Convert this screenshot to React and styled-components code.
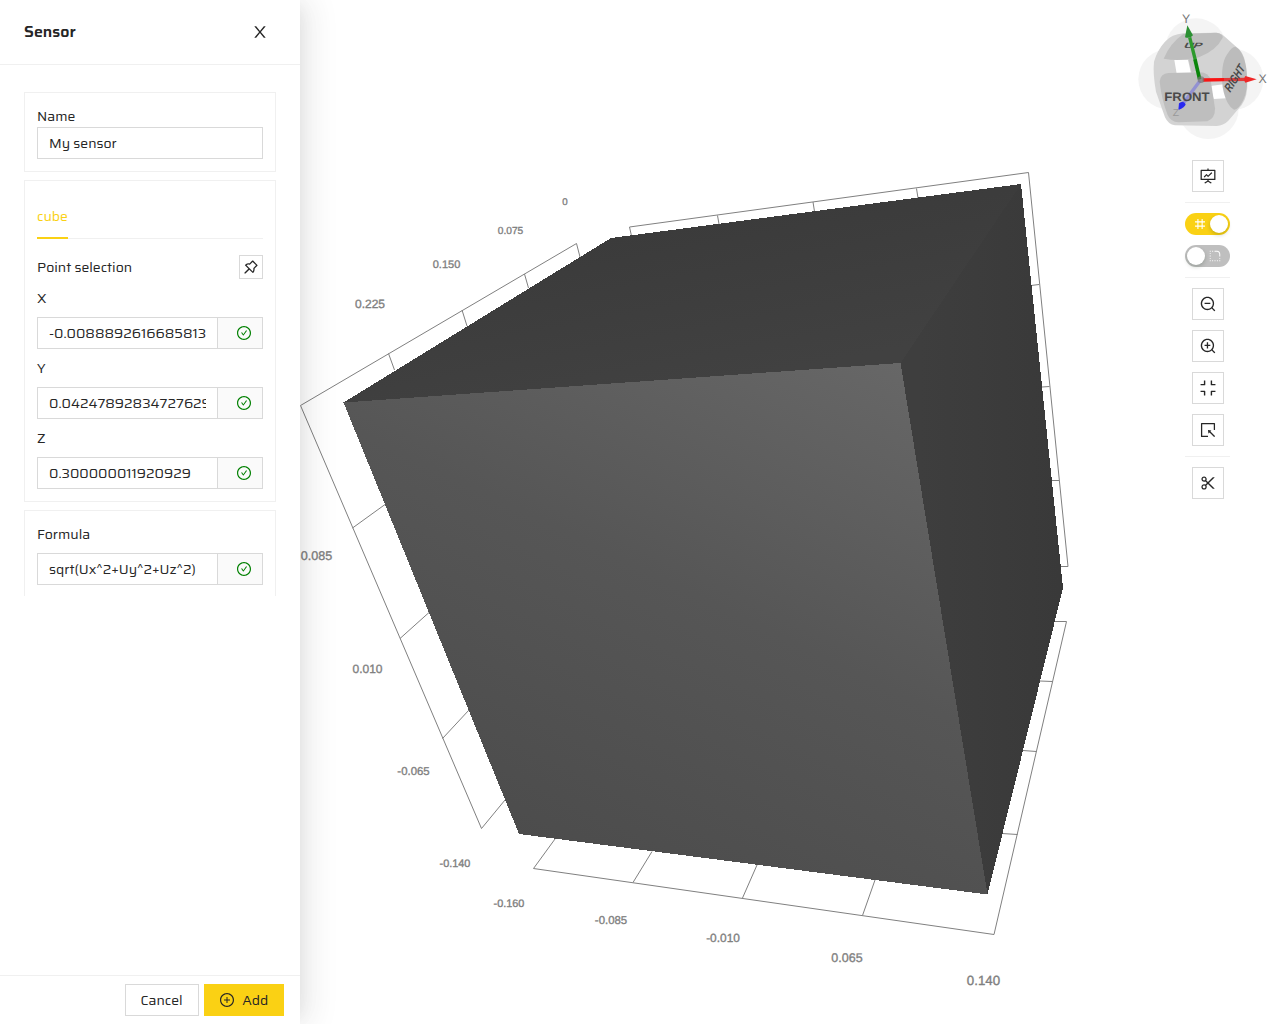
import React from 'react';
import styled, { createGlobalStyle } from 'styled-components';
import {
  AiOutlineCheckCircle,
  AiOutlineCompress,
  AiOutlineFundProjectionScreen,
  AiOutlineNumber,
  AiOutlinePlusCircle,
  AiOutlinePushpin,
  AiOutlineRadiusUpright,
  AiOutlineScissor,
  AiOutlineSelect,
  AiOutlineZoomIn,
  AiOutlineZoomOut,
} from 'react-icons/ai';

const GlobalStyle = createGlobalStyle`
  *, *::before, *::after { box-sizing: border-box; }
  body {
    margin: 0;
    background: #fff;
    color: #262626;
    font-family: Saira, Inter, "Noto Sans", sans-serif;
    font-size: 14px;
    line-height: 22px;
    overflow: hidden;
  }
  button, input { font: inherit; color: inherit; }
`;

const Page = styled.div`
  display: flex;
  width: 1280px;
  height: 1024px;
  overflow: hidden;
`;

const Drawer = styled.aside`
  display: flex;
  flex-direction: column;
  flex: 0 0 300px;
  background: #fff;
  z-index: 1;
  box-shadow: 6px 0 16px -8px rgba(0, 0, 0, 0.08), 9px 0 28px rgba(0, 0, 0, 0.05),
    6px 0 36px 6px rgba(0, 0, 0, 0.04);
`;

const DrawerHeader = styled.header`
  display: flex;
  align-items: center;
  justify-content: space-between;
  flex: 0 0 65px;
  padding: 0 31px 1px 24px;
  border-bottom: 1px solid #f0f0f0;
`;

const Title = styled.h1`
  margin: 0;
  font-size: 16px;
  font-weight: 600;
`;

const CloseButton = styled.button`
  display: flex;
  padding: 0;
  border: 0;
  background: none;
`;

const DrawerBody = styled.div`
  display: flex;
  flex-direction: column;
  gap: 8px;
  flex: 1;
  padding: 27px 24px 0;
`;

const DrawerFooter = styled.footer`
  display: flex;
  justify-content: flex-end;
  gap: 5px;
  flex: 0 0 49px;
  padding: 8px 16px;
  border-top: 1px solid #f0f0f0;
`;

const Card = styled.section`
  display: flex;
  flex-direction: column;
  gap: ${(p) => p.$gap || 0}px;
  padding: 12px;
  border: 1px solid #f0f0f0;
  ${(p) => p.$open && 'border-bottom: 0; padding-bottom: 11px;'}
`;

const Label = styled.div`
  height: 22px;
  white-space: nowrap;
`;

const TextInput = styled.input`
  flex: 1;
  min-width: 0;
  width: 100%;
  height: 32px;
  padding: 4px 11px;
  border: 1px solid #d9d9d9;
  border-radius: 0;
  background: #fff;
  outline: none;
`;

const InputGroup = styled.div`
  display: flex;
  height: 32px;
`;

const Addon = styled.span`
  display: flex;
  align-items: center;
  justify-content: flex-end;
  width: 45px;
  padding-right: 10px;
  border: 1px solid #d9d9d9;
  border-left: 0;
  background: #fafafa;
  color: #008000;
  font-size: 16px;
`;

const TabBar = styled.div`
  display: flex;
  height: 46px;
  margin-bottom: 8px;
  box-shadow: inset 0 -1px #f0f0f0;
`;

const Tab = styled.div`
  width: 31px;
  padding-top: 12px;
  border-bottom: 2px solid #fad114;
  color: #fad114;
  white-space: nowrap;
`;

const SelectionRow = styled.div`
  display: flex;
  align-items: center;
  justify-content: space-between;
  height: 24px;
`;

const IconButton = styled.button`
  display: flex;
  align-items: center;
  justify-content: center;
  width: ${(p) => p.$size}px;
  height: ${(p) => p.$size}px;
  padding: 0;
  border: 1px solid #d9d9d9;
  background: #fff;
  font-size: 18px;
`;

const Button = styled.button`
  display: flex;
  align-items: center;
  justify-content: center;
  gap: 7.5px;
  width: ${(p) => p.$width}px;
  height: 32px;
  padding: 0 1px 0 0;
  border: 1px solid ${(p) => (p.$primary ? '#fad114' : '#d9d9d9')};
  background: ${(p) => (p.$primary ? '#fad114' : '#fff')};
`;

const Viewer = styled.main`
  position: relative;
  flex: 1;
`;

const Scene = styled.svg`
  display: block;
  width: 980px;
  height: 1024px;
  font-family: "Liberation Sans", Arial, sans-serif;
  text-rendering: geometricPrecision;
`;

const Toolbar = styled.div`
  position: absolute;
  top: 160px;
  right: 50px;
  display: flex;
  flex-direction: column;
  align-items: center;
  gap: 10px;
  width: 45px;
`;

const Divider = styled.div`
  width: 45px;
  height: 1px;
  background: #f0f0f0;
`;

const Switch = styled.button`
  display: flex;
  flex-direction: ${(p) => (p.$on ? 'row' : 'row-reverse')};
  align-items: center;
  justify-content: space-between;
  width: 45px;
  height: 22px;
  padding: ${(p) => (p.$on ? '0 2px 0 8px' : '0 8px 0 2px')};
  border: 0;
  border-radius: 11px;
  background: ${(p) => (p.$on ? '#fad114' : '#bfbfbf')};
  color: #fff;
  font-size: 14px;
`;

const Knob = styled.span`
  width: 18px;
  height: 18px;
  border-radius: 50%;
  background: #fff;
  box-shadow: 0 2px 4px rgba(0, 35, 11, 0.2);
`;

const CloseIcon = () => (
  <svg width="18" height="18" viewBox="0 0 1024 1024" fill="currentColor">
    <path d="M563.8 512l262.5-312.9c4.4-5.2.7-13.1-6.1-13.1h-79.8c-4.7 0-9.2 2.1-12.3 5.7L511.6 449.8 295.1 191.7c-3-3.6-7.5-5.7-12.3-5.7H203c-6.8 0-10.5 7.9-6.1 13.1L459.4 512 196.9 824.9A7.95 7.95 0 0 0 203 838h79.8c4.7 0 9.2-2.1 12.3-5.7l216.5-258.1 216.5 258.1c3 3.6 7.5 5.7 12.3 5.7h79.8c6.8 0 10.5-7.9 6.1-13.1L563.8 512z" />
  </svg>
);

const GRID = [
  'M580 257L576.500 243.500L300.500 405.500L481.500 828.500L505 800',
  'M524.500 274L528.500 288M462 310L467 326M388.500 353.500L394.500 370',
  'M352.500 528L385 504.500M400 638.500L429 612.500M442.500 738.500L469 710',
  'M555 839L533.500 868.500L994 934.500L1066.500 621.500H1055',
  'M633 882.500L652 851.500M742.500 898L757 865M862.500 915.500L875 880',
  'M1017.500 834.500L1002 833.500M1036.500 751.500L1023 750.500M1052.500 681.500L1040 681',
  'M631.500 236L629.500 227L1028.500 172.500L1068 566.500H1060',
  'M717.500 215.500L719 224M813 202L814.500 211.500M916.500 188.500L918 198',
  'M1039 284.500L1031 285.500M1049.500 386.500L1042 387M1059 480.500L1052 480.500',
];

const TICKS = [
  ['0', 565, 202, 9.7],
  ['0.075', 510.5, 230.5, 10.2],
  ['0.150', 446.5, 264, 11],
  ['0.225', 370, 303.5, 12],
  ['0.085', 316.5, 555.5, 12.6],
  ['0.010', 367.5, 669, 12],
  ['-0.065', 413.5, 771, 11.4],
  ['-0.140', 455, 863, 10.9],
  ['-0.160', 509, 903.5, 10.9],
  ['-0.085', 611, 920, 11.4],
  ['-0.010', 723, 938, 11.9],
  ['0.065', 847, 958, 12.5],
  ['0.140', 983.5, 980, 13.3],
];

const Orientation = () => (
  <g transform="translate(1120 0) scale(0.33333)">
    <g fill="#f4f4f4">
      <circle cx="228" cy="147" r="92" />
      <circle cx="145" cy="238" r="90" />
      <circle cx="338" cy="238" r="92" />
      <circle cx="265" cy="326" r="91" />
    </g>
    <path
      fill="#d3d3d3"
      d="M135 125Q155 103 190 100L285 98Q300 98 312 108L345 137Q372 155 376 190L382 240Q384 290 365 315L325 362Q310 377 290 378L165 376Q145 374 135 352L108 275Q98 220 102 185Q112 150 135 125Z"
    />
    <path fill="#fff" d="M163 180L204 180L213 220L170 221ZM271 258L311 253L318 295L281 297Z" />
    <path fill="#bebebe" d="M131 176Q150 130 190 102L290 98Q310 102 308 113Q290 150 237 172Q180 186 131 176Z" />
    <path fill="#bebebe" d="M119 245Q121 221 145 219L240 217Q265 217 272 240L285 325Q286 355 262 364L175 367Q152 365 143 345Q125 300 119 245Z" />
    <path fill="#bcbcbc" d="M346 140Q370 152 379 205Q387 265 370 300Q355 330 342 329Q318 316 308 262Q301 195 320 165Q335 140 346 140Z" />
    <path fill="none" stroke="#c4c4c4" strokeWidth="14" d="M212 175L222 215" />
    <text
      transform="translate(216 144) skewX(-30)"
      fontSize="23"
      fontWeight="700"
      fill="#4c4c4c"
      textAnchor="middle"
      textLength="54"
      lengthAdjust="spacingAndGlyphs"
    >
      UP
    </text>
    <path stroke="#2d9a2d" strokeWidth="10" d="M226 180L209 112" />
    <path stroke="#0a850a" strokeWidth="11" d="M239 238L225 178" />
    <path fill="#2b9033" d="M202 76L219 106Q209 117 195 112Z" />
    <path stroke="#f91414" strokeWidth="10" d="M248 240L312 239" />
    <path stroke="#e03a3a" strokeWidth="10" d="M312 239L380 238" />
    <path fill="#f02828" d="M410 238L376 248Q369 238 376 228Z" />
    <path stroke="#9291d2" strokeWidth="10" d="M240 242L190 310" />
    <circle cx="243" cy="239" r="10" fill="#777" opacity="0.7" />
    <g fontWeight="700" fill="#4a4a4a" textAnchor="middle">
      <text x="201" y="303" fontSize="37" textLength="136" lengthAdjust="spacingAndGlyphs">FRONT</text>
      <text transform="translate(353 243) rotate(-58) skewX(-14)" fontSize="36" textLength="86" lengthAdjust="spacingAndGlyphs">RIGHT</text>
    </g>
    <path fill="#2929f0" d="M175 330L177 310Q190 299 197 313Q195 323 175 330Z" />
    <g fill="#777" textAnchor="middle" fontSize="37">
      <text x="198" y="70">Y</text>
      <text x="428" y="248">X</text>
      <text x="168" y="349" fontSize="31" fill="#999">Z</text>
    </g>
  </g>
);

const CubeScene = () => (
  <Scene viewBox="300 0 980 1024">
    <defs>
      <linearGradient id="front" gradientUnits="userSpaceOnUse" x1="901" y1="363" x2="640" y2="900">
        <stop offset="0" stopColor="#676767" />
        <stop offset="0.5" stopColor="#565656" />
        <stop offset="1" stopColor="#4c4c4c" />
      </linearGradient>
      <linearGradient id="top" gradientUnits="userSpaceOnUse" x1="700" y1="220" x2="730" y2="380">
        <stop offset="0" stopColor="#3b3b3b" />
        <stop offset="1" stopColor="#414141" />
      </linearGradient>
      <linearGradient id="side" gradientUnits="userSpaceOnUse" x1="920" y1="500" x2="1060" y2="500">
        <stop offset="0" stopColor="#3e3e3e" />
        <stop offset="1" stopColor="#393939" />
      </linearGradient>
    </defs>
    {GRID.map((d) => (
      <path key={d} d={d} fill="none" stroke="#808080" strokeWidth="1" />
    ))}
    <g shapeRendering="crispEdges">
      <polygon points="343.5,402.5 611,238 1021,184 1063,588 987.5,894.5 519,834" fill="#3d3d3d" />
      <polygon points="343.5,402.5 611,238 1021,184 901,363" fill="url(#top)" />
      <polygon points="900.5,363 1021,184 1063,588 987.5,894.5" fill="url(#side)" />
      <polygon points="343.5,402.5 900.5,363 987.5,894.5 519,834" fill="url(#front)" />
    </g>
    {TICKS.map(([text, x, y, size]) => (
      <text key={text + x} x={x} y={y + size * 0.34} fontSize={size} textAnchor="middle" fill="#808080" stroke="#808080" strokeWidth="0.35">
        {text}
      </text>
    ))}
    <Orientation />
  </Scene>
);

const CheckedInput = ({ value }) => (
  <InputGroup>
    <TextInput defaultValue={value} />
    <Addon>
      <AiOutlineCheckCircle />
    </Addon>
  </InputGroup>
);

export default function App() {
  return (
    <Page>
      <GlobalStyle />
      <Drawer>
        <DrawerHeader>
          <Title>Sensor</Title>
          <CloseButton aria-label="Close">
            <CloseIcon />
          </CloseButton>
        </DrawerHeader>
        <DrawerBody>
          <Card>
            <Label>Name</Label>
            <TextInput defaultValue="My sensor" />
          </Card>
          <Card $gap={8}>
            <TabBar>
              <Tab>cube</Tab>
            </TabBar>
            <SelectionRow>
              <Label>Point selection</Label>
              <IconButton $size={24} aria-label="Pick point">
                <AiOutlinePushpin />
              </IconButton>
            </SelectionRow>
            <Label>X</Label>
            <CheckedInput value="-0.0088892616685813" />
            <Label>Y</Label>
            <CheckedInput value="0.04247892834727629" />
            <Label>Z</Label>
            <CheckedInput value="0.300000011920929" />
          </Card>
          <Card $gap={8} $open>
            <Label>Formula</Label>
            <CheckedInput value="sqrt(Ux^2+Uy^2+Uz^2)" />
          </Card>
        </DrawerBody>
        <DrawerFooter>
          <Button $width={74}>Cancel</Button>
          <Button $width={80} $primary>
            <AiOutlinePlusCircle size={16} />
            Add
          </Button>
        </DrawerFooter>
      </Drawer>
      <Viewer>
        <CubeScene />
        <Toolbar>
          <IconButton $size={32}><AiOutlineFundProjectionScreen /></IconButton>
          <Divider />
          <Switch $on>
            <AiOutlineNumber />
            <Knob />
          </Switch>
          <Switch>
            <AiOutlineRadiusUpright />
            <Knob />
          </Switch>
          <Divider />
          <IconButton $size={32}><AiOutlineZoomOut /></IconButton>
          <IconButton $size={32}><AiOutlineZoomIn /></IconButton>
          <IconButton $size={32}><AiOutlineCompress /></IconButton>
          <IconButton $size={32}><AiOutlineSelect /></IconButton>
          <Divider />
          <IconButton $size={32}><AiOutlineScissor /></IconButton>
        </Toolbar>
      </Viewer>
    </Page>
  );
}
